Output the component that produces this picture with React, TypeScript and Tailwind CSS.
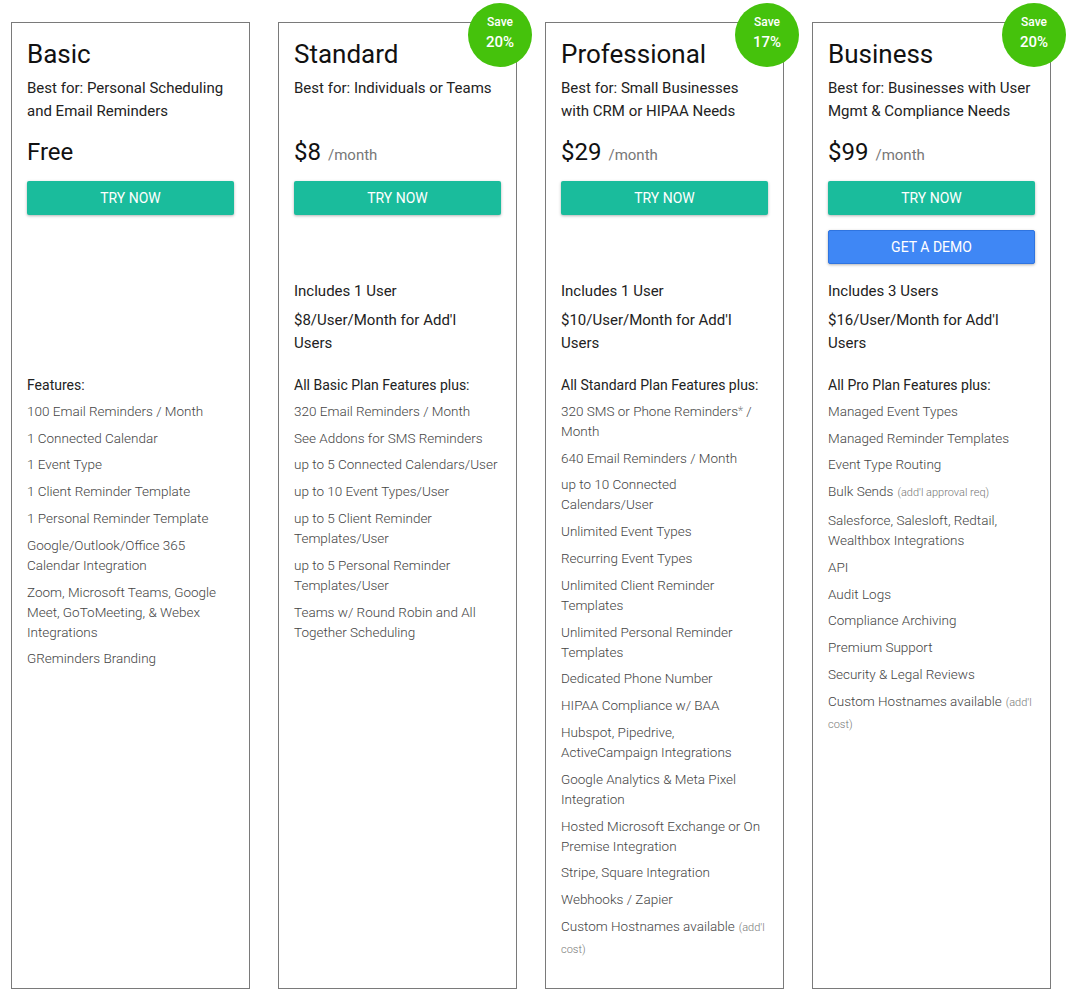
import React from 'react';

interface Feature {
  text: string;
  star?: boolean;
  note?: string;
}

interface Plan {
  name: string;
  bestFor: string;
  price: string;
  per?: string;
  save?: string;
  demo?: boolean;
  includes?: string;
  addl?: string;
  featuresTitle: string;
  features: Feature[];
}

const plans: Plan[] = [
  {
    name: 'Basic',
    bestFor: 'Best for: Personal Scheduling and Email Reminders',
    price: 'Free',
    featuresTitle: 'Features:',
    features: [
      { text: '100 Email Reminders / Month' },
      { text: '1 Connected Calendar' },
      { text: '1 Event Type' },
      { text: '1 Client Reminder Template' },
      { text: '1 Personal Reminder Template' },
      { text: 'Google/Outlook/Office 365 Calendar Integration' },
      { text: 'Zoom, Microsoft Teams, Google Meet, GoToMeeting, & Webex Integrations' },
      { text: 'GReminders Branding' },
    ],
  },
  {
    name: 'Standard',
    bestFor: 'Best for: Individuals or Teams',
    price: '$8',
    per: '/month',
    save: '20%',
    includes: 'Includes 1 User',
    addl: '$8/User/Month for Add\'l',
    featuresTitle: 'All Basic Plan Features plus:',
    features: [
      { text: '320 Email Reminders / Month' },
      { text: 'See Addons for SMS Reminders' },
      { text: 'up to 5 Connected Calendars/User' },
      { text: 'up to 10 Event Types/User' },
      { text: 'up to 5 Client Reminder Templates/User' },
      { text: 'up to 5 Personal Reminder Templates/User' },
      { text: 'Teams w/ Round Robin and All Together Scheduling' },
    ],
  },
  {
    name: 'Professional',
    bestFor: 'Best for: Small Businesses with CRM or HIPAA Needs',
    price: '$29',
    per: '/month',
    save: '17%',
    includes: 'Includes 1 User',
    addl: '$10/User/Month for Add\'l',
    featuresTitle: 'All Standard Plan Features plus:',
    features: [
      { text: '320 SMS or Phone Reminders', star: true },
      { text: '640 Email Reminders / Month' },
      { text: 'up to 10 Connected Calendars/User' },
      { text: 'Unlimited Event Types' },
      { text: 'Recurring Event Types' },
      { text: 'Unlimited Client Reminder Templates' },
      { text: 'Unlimited Personal Reminder Templates' },
      { text: 'Dedicated Phone Number' },
      { text: 'HIPAA Compliance w/ BAA' },
      { text: 'Hubspot, Pipedrive, ActiveCampaign Integrations' },
      { text: 'Google Analytics & Meta Pixel Integration' },
      { text: 'Hosted Microsoft Exchange or On Premise Integration' },
      { text: 'Stripe, Square Integration' },
      { text: 'Webhooks / Zapier' },
      { text: 'Custom Hostnames available', note: '(add\'l cost)' },
    ],
  },
  {
    name: 'Business',
    bestFor: 'Best for: Businesses with User Mgmt & Compliance Needs',
    price: '$99',
    per: '/month',
    save: '20%',
    demo: true,
    includes: 'Includes 3 Users',
    addl: '$16/User/Month for Add\'l',
    featuresTitle: 'All Pro Plan Features plus:',
    features: [
      { text: 'Managed Event Types' },
      { text: 'Managed Reminder Templates' },
      { text: 'Event Type Routing' },
      { text: 'Bulk Sends', note: '(add\'l approval req)' },
      { text: 'Salesforce, Salesloft, Redtail, Wealthbox Integrations' },
      { text: 'API' },
      { text: 'Audit Logs' },
      { text: 'Compliance Archiving' },
      { text: 'Premium Support' },
      { text: 'Security & Legal Reviews' },
      { text: 'Custom Hostnames available', note: '(add\'l cost)' },
    ],
  },
];

const PlanCard: React.FC<{ plan: Plan }> = ({ plan }) => (
  <div className="relative w-[239px] shrink-0 border border-[#7a7a7a] bg-white px-[15px] pt-[15px] pb-[28px]">
    {plan.save && (
      <div className="absolute -right-[16px] -top-[20px] flex h-[64px] w-[64px] flex-col items-center justify-center rounded-full bg-[#45c20c] pb-[6px] text-white">
        <span className="text-[12px] leading-[16px] font-medium">Save</span>
        <span className="mt-[3px] text-[15px] leading-[18px] font-medium">{plan.save}</span>
      </div>
    )}
    <h2 className="text-[26px] leading-[32px] text-[#111]">{plan.name}</h2>
    <p className="mt-[7px] min-h-[46px] text-[15px] leading-[23px] text-[#222]">{plan.bestFor}</p>
    <div className="mt-[14px] flex h-[30px] items-end">
      <span className="text-[24px] leading-[30px] text-[#111]">{plan.price}</span>
      {plan.per && <span className="mb-[2px] ml-[7px] text-[15px] leading-[20px] text-[#777]">{plan.per}</span>}
    </div>
    <button className="mt-[14px] h-[34px] w-full rounded-[2px] bg-[#1abc9c] text-[14px] font-normal text-white shadow-[0_1px_3px_rgba(0,0,0,0.3)]">
      TRY NOW
    </button>
    <div className="h-[49px] pt-[15px]">
      {plan.demo && (
        <button className="h-[34px] w-full rounded-[2px] border border-[#2f74e0] bg-[#3f87f5] text-[14px] font-normal text-white shadow-[0_1px_3px_rgba(0,0,0,0.3)]">
          GET A DEMO
        </button>
      )}
    </div>
    <div className="mt-[16px] h-[76px] text-[15px] leading-[23px] text-[#222]">
      {plan.includes && (
        <>
          <p>{plan.includes}</p>
          <p className="mt-[6px]">
            {plan.addl}
            <br />
            Users
          </p>
        </>
      )}
    </div>
    <p className="mt-[19px] text-[14px] leading-[20px] text-[#222]">{plan.featuresTitle}</p>
    <ul className="-mt-[1px]">
      {plan.features.map((f) => (
        <li key={f.text} className="mt-[6.8px] text-[13.5px] leading-[20px] font-light text-[#444]">
          {f.text}
          {f.star && (
            <>
              <span className="align-top text-[12px] text-[#888]">*</span> / Month
            </>
          )}
          {f.note && <span className="ml-[4px] text-[11px] text-[#777]">{f.note}</span>}
        </li>
      ))}
    </ul>
  </div>
);

const App: React.FC = () => {
  return (
    <div className="min-h-[1002px] bg-white pl-[11px] pt-[22px] font-['Roboto',sans-serif]">
      <div className="flex items-stretch gap-[28px]">
        {plans.map((plan) => (
          <PlanCard key={plan.name} plan={plan} />
        ))}
      </div>
    </div>
  );
};

export default App;
